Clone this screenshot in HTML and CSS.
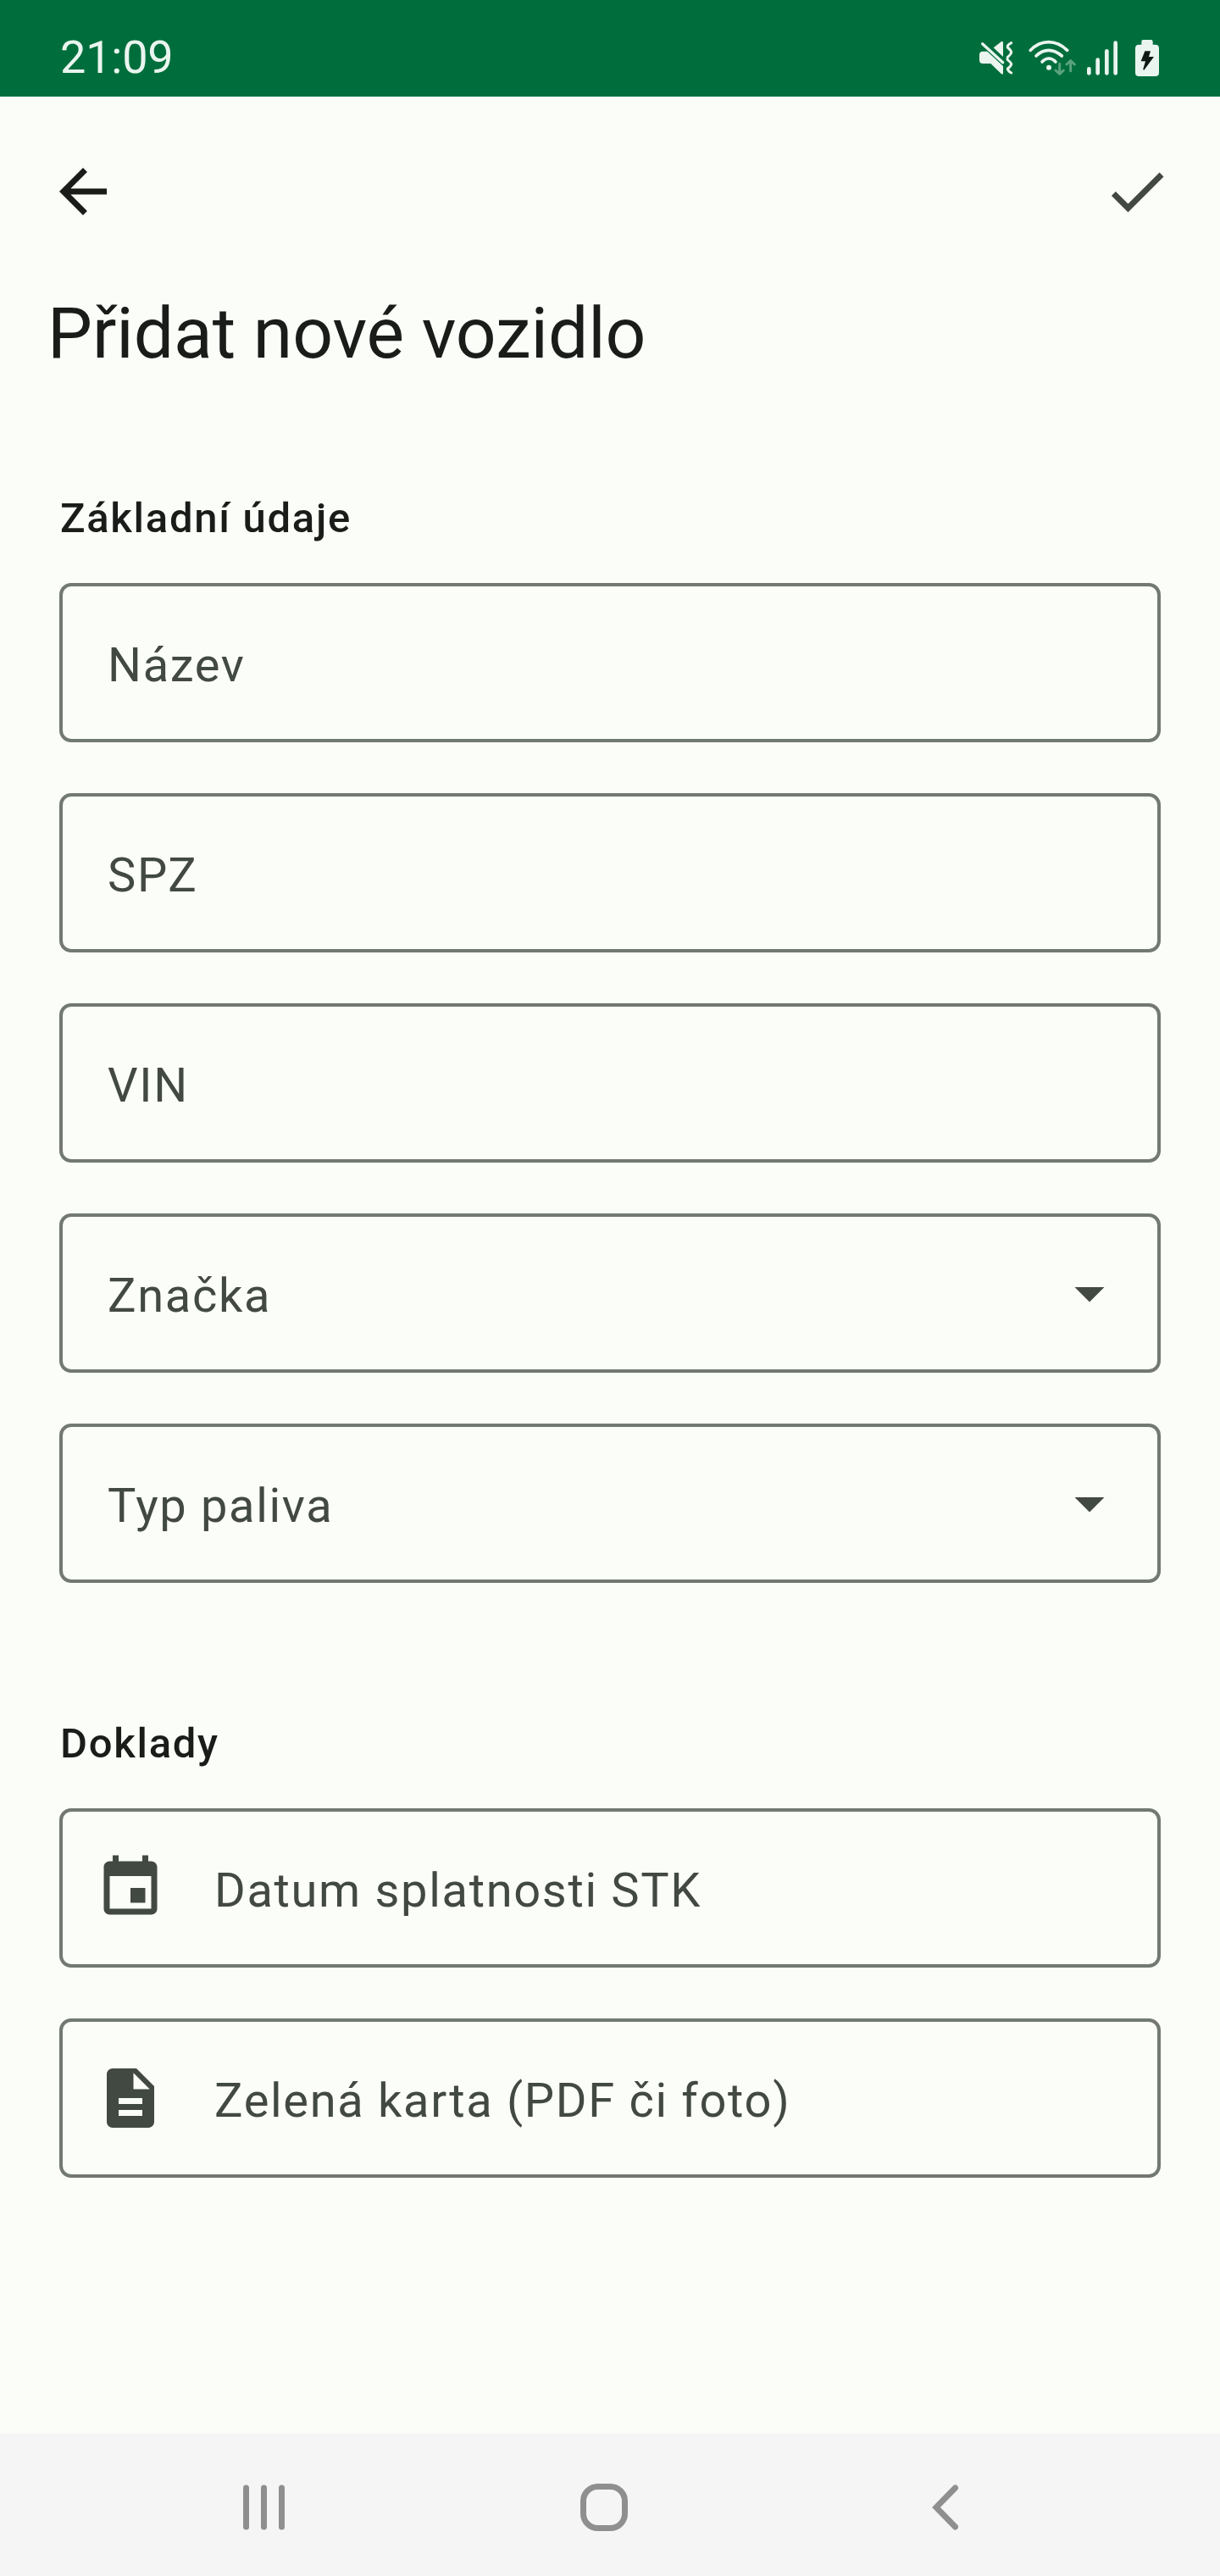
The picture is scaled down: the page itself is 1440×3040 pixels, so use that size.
FILE: index.html
```html
<!DOCTYPE html>
<html lang="cs">
<head>
<meta charset="utf-8">
<title>Přidat nové vozidlo</title>
<link rel="stylesheet" href="styles.css">
</head>
<body>
<div class="screen">
  <header class="status-bar">
    <span class="clock">21:09</span>
    <div class="status-icons">
      <svg class="icon-mute" width="42" height="48" viewBox="45 45 126 144">
        <path d="M48 104q0-12 12-12h16l56 52v24q0 8-7 3L88 135H60q-12 0-12-12z" fill="#eaf5ef"/>
        <path d="M98 79l25-20q9-6 9 3v49z" fill="#eaf5ef"/>
        <path d="M59 65l72 66" fill="none" stroke="#eaf5ef" stroke-width="10" stroke-linecap="round"/>
        <path d="M161 62q-16 8-13 16 12 10 13 17-1 8-13 17-2 8 0 10 12 9 13 15-1 7-13 16 0 8 13 15" fill="none" stroke="#eaf5ef" stroke-width="9" stroke-linecap="round" stroke-linejoin="round"/>
      </svg>
      <svg class="icon-wifi" width="56" height="48" viewBox="222 45 168 144">
        <g fill="none" stroke="#eaf5ef" stroke-width="11" stroke-linecap="round">
          <path d="M229 88Q257 59 293 59T359 88"/>
          <path d="M249 108Q269 88 293 88T340 108"/>
          <path d="M270 129Q281 117 294 117T318 129"/>
        </g>
        <circle cx="294" cy="149" r="9" fill="#eaf5ef"/>
        <g fill="none" stroke="#5aa27f" stroke-width="9" stroke-linecap="round" stroke-linejoin="round">
          <path d="M332 136v36M318 159l14 13 14-13"/>
          <path d="M371 161v-36M357 138l14-13 14 13"/>
        </g>
      </svg>
      <svg class="icon-signal" width="38" height="48" viewBox="426 45 114 144" fill="#eaf5ef">
        <rect x="429" y="147" width="14" height="29" rx="7"/>
        <rect x="460" y="115" width="14" height="61" rx="7"/>
        <rect x="492" y="84" width="14" height="92" rx="7"/>
        <rect x="523" y="55" width="14" height="121" rx="7"/>
      </svg>
      <svg class="icon-battery" width="30" height="48" viewBox="597 45 90 144">
        <path d="M622 57q0-6 6-6h28q6 0 6 6v11h9q13 0 13 13v86q0 13-13 13h-58q-13 0-13-13V81q0-13 13-13h9z" fill="#eaf5ef"/>
        <path d="M634 91h20l-6 20h18L631 158q-4 0-3-4l8-27h-16z" fill="#101a15"/>
      </svg>
    </div>
  </header>

  <nav class="app-bar">
    <svg class="icon" viewBox="0 0 24 24"><path fill="#1a1c19" d="M20 11H7.83l5.59-5.59L12 4l-8 8 8 8 1.41-1.41L7.83 13H20z"/></svg>
    <svg class="icon" viewBox="0 0 24 24"><path d="M9 16.17L4.83 12l-1.42 1.41L9 19 21 7l-1.41-1.41z"/></svg>
  </nav>

  <main class="content">
    <h1 class="title">Přidat nové vozidlo</h1>

    <section class="section">
      <h2 class="section-title">Základní údaje</h2>
      <div class="fields">
        <div class="field"><span class="label">Název</span></div>
        <div class="field"><span class="label">SPZ</span></div>
        <div class="field"><span class="label">VIN</span></div>
        <div class="field field-select">
          <span class="label">Značka</span>
          <svg class="icon" viewBox="0 0 24 24"><path d="M7 10l5 5 5-5z"/></svg>
        </div>
        <div class="field field-select">
          <span class="label">Typ paliva</span>
          <svg class="icon" viewBox="0 0 24 24"><path d="M7 10l5 5 5-5z"/></svg>
        </div>
      </div>
    </section>

    <section class="section">
      <h2 class="section-title">Doklady</h2>
      <div class="fields">
        <div class="field field-lead">
          <svg class="icon" viewBox="0 0 24 24"><path d="M17 12h-5v5h5zM16 1v2H8V1H6v2H5c-1.11 0-2 .9-2 2v14c0 1.1.89 2 2 2h14c1.1 0 2-.9 2-2V5c0-1.1-.9-2-2-2h-1V1zm3 18H5V8h14z"/></svg>
          <span class="label">Datum splatnosti STK</span>
        </div>
        <div class="field field-lead">
          <svg class="icon" viewBox="0 0 24 24"><path d="M14 2H6c-1.1 0-2 .9-2 2v16c0 1.1.89 2 1.99 2H18c1.1 0 2-.9 2-2V8zm2 16H8v-2h8zm0-4H8v-2h8zm-3-5V3.5L18.5 9z"/></svg>
          <span class="label">Zelená karta (PDF či foto)</span>
        </div>
      </div>
    </section>
  </main>

  <footer class="nav-bar">
    <svg width="60" height="60" viewBox="0 0 60 60" fill="#8f8f8f">
      <rect x="5" y="3.5" width="7" height="53" rx="3.5"/>
      <rect x="26" y="3.5" width="7" height="53" rx="3.5"/>
      <rect x="47" y="3.5" width="7" height="53" rx="3.5"/>
    </svg>
    <svg width="60" height="60" viewBox="0 0 60 60" fill="none" stroke="#8f8f8f" stroke-width="7">
      <rect x="5.5" y="5.5" width="49" height="49" rx="17"/>
    </svg>
    <svg width="60" height="60" viewBox="0 0 60 60" fill="none" stroke="#8f8f8f" stroke-width="7" stroke-linecap="round">
      <path d="M43.5 7L21 30l22.5 23"/>
    </svg>
  </footer>
</div>
</body>
</html>
```

FILE: styles.css
```css
* {
  box-sizing: border-box;
}

body {
  margin: 0;
  background: #fbfdf8;
  font-family: Roboto, "Noto Sans", sans-serif;
  color: #1a1c19;
}

.screen {
  display: flex;
  flex-direction: column;
  width: 1440px;
  height: 3040px;
}

.status-bar {
  display: flex;
  justify-content: space-between;
  height: 114px;
  padding: 0 71px;
  background: #006e3c;
}

.clock {
  padding-top: 36px;
  font-size: 54px;
  line-height: 64px;
  letter-spacing: -0.2px;
  color: #eaf5ef;
}

.status-icons {
  display: flex;
  padding-top: 45px;
}

.icon-wifi {
  margin-left: 17px;
}

.icon-signal {
  margin-left: 12px;
}

.icon-battery {
  margin-left: 19px;
}

.app-bar {
  display: flex;
  align-items: center;
  justify-content: space-between;
  height: 224px;
  padding: 0 56px;
}

.icon {
  flex: none;
  width: 84px;
  height: 84px;
  fill: #424942;
}

.content {
  flex: 1;
  padding: 8px 70px 0;
}

.title {
  margin: 0 0 0 -14px;
  font-size: 84px;
  font-weight: 400;
  line-height: 96px;
  letter-spacing: -0.06px;
}

.section {
  padding-top: 140px;
}

.section + .section {
  padding-top: 160px;
}

.section-title {
  margin: 0 0 46px;
  padding-left: 1px;
  font-size: 49px;
  font-weight: 500;
  line-height: 60px;
  letter-spacing: 1.7px;
}

.fields {
  display: flex;
  flex-direction: column;
  gap: 60px;
}

.field {
  display: flex;
  align-items: center;
  height: 188px;
  padding: 0 53px;
  border: 4px solid #727971;
  border-radius: 14px;
}

.field-select {
  justify-content: space-between;
  padding-right: 38px;
}

.field-lead {
  gap: 57px;
  padding-left: 38px;
}

.label {
  padding-top: 6px;
  font-size: 56px;
  line-height: 66px;
  letter-spacing: 1.68px;
  color: #424942;
  white-space: nowrap;
}

.nav-bar {
  display: flex;
  align-items: center;
  justify-content: space-between;
  height: 168px;
  padding: 5px 296px 0 282px;
  background: #f5f5f5;
}
```
